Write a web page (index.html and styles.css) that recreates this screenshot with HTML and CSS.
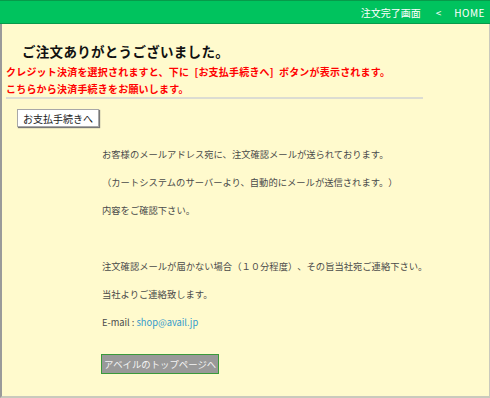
FILE: index.html
```html
<!DOCTYPE html>
<html lang="ja">

<head>
    <meta charset="utf-8">
    <meta name="viewport" content="width=device-width, initial-scale=1.0">
    <title>注文完了画面</title>
    <link rel="stylesheet" href="styles.css">
</head>

<body>
    <header class="topbar">
        <span>注文完了画面</span>
        <span class="sep">&lt;</span>
        <a href="#" class="home">HOME</a>
    </header>
    <main class="page">
        <h1 class="thanks">ご注文ありがとうございました。</h1>
        <p class="notice">クレジット決済を選択されますと、下に&ensp;[お支払手続きへ]&ensp;ボタンが表示されます。<br>こちらから決済手続きをお願いします。</p>
        <hr class="rule">
        <button class="pay">お支払手続きへ</button>
        <div class="message">
            <p>お客様のメールアドレス宛に、注文確認メールが送られております。</p>
            <p>（カートシステムのサーバーより、自動的にメールが送信されます。）</p>
            <p>内容をご確認下さい。</p>
            <p class="gap">注文確認メールが届かない場合（１０分程度）、その旨当社宛ご連絡下さい。</p>
            <p>当社よりご連絡致します。</p>
            <p>E-mail : <a href="#" class="mail">shop@avail.jp</a></p>
        </div>
        <button class="toppage">アベイルのトップページへ</button>
    </main>
</body>

</html>
```

FILE: styles.css
```css
body {
    margin: 0;
    padding: 0;
    font-family: "Noto Sans CJK JP", "Noto Sans", sans-serif;
    background-color: #fffacd;
    text-spacing-trim: space-all;
}

/**************** Header **************/

.topbar {
    height: 24px;
    box-sizing: border-box;
    background-color: #00c35e;
    border-top: 1px solid #079a4a;
    border-bottom: 1px solid #079a4a;
    display: flex;
    justify-content: flex-end;
    align-items: center;
    padding-right: 5px;
    color: white;
    font-size: 10px;
}

.topbar .sep {
    margin: 0 13px 0 15px;
}

.home {
    color: white;
    text-decoration: none;
    letter-spacing: 0.5px;
}

/**************** Main **************/

.page {
    height: 374px;
    box-sizing: border-box;
    border-left: 2px solid #9a9a9a;
    border-right: 1px solid #c9c9bd;
    border-bottom: 2px solid #c9c9bd;
    padding-top: 18px;
}

.thanks {
    margin: 0;
    padding-left: 20px;
    font-size: 13.5px;
    line-height: 18px;
    letter-spacing: 0.3px;
    color: #111;
}

.notice {
    margin: 3px 0 0;
    padding-left: 4px;
    font-size: 10px;
    line-height: 17px;
    letter-spacing: 0.2px;
    font-weight: bold;
    color: #ff0000;
}

.rule {
    margin: 0 0 0 4px;
    width: 417px;
    border: 0;
    border-top: 2px solid #dcdcd2;
}

.pay {
    display: block;
    margin: 10px 0 0 15px;
    height: 18px;
    padding: 0 5px;
    font-family: inherit;
    font-size: 10px;
    color: #222;
    background-color: white;
    border: 1px solid #a8a8a8;
    box-shadow: 1px 1px 1px #777;
}

.message {
    margin: 13px 0 0 100px;
    font-size: 9.3px;
    color: #4a4a4a;
}

.message p {
    margin: 0;
    line-height: 28px;
}

.message .gap {
    margin-top: 28px;
}

.mail {
    color: #3399cc;
    text-decoration: none;
}

.toppage {
    display: block;
    margin: 18px 0 0 99px;
    height: 20px;
    padding: 0 2px;
    font-family: inherit;
    font-size: 9.4px;
    color: #f4f4f4;
    background-color: #999;
    border: 1px solid #3a9a3a;
}
```
